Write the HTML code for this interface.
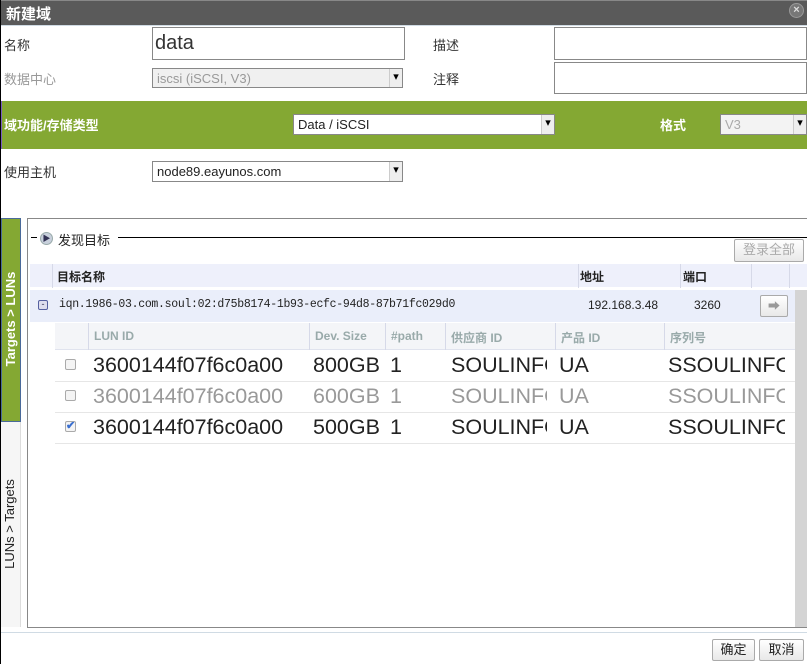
<!DOCTYPE html>
<html><head><meta charset="utf-8"><style>
*{margin:0;padding:0;box-sizing:border-box}
body{width:807px;height:664px;position:relative;overflow:hidden;background:#fff;font-family:"Liberation Sans","Noto Sans CJK SC",sans-serif;font-size:13px;color:#222}
.a{position:absolute}
.inp{position:absolute;border:1px solid #888;background:#fff}
.sel{position:absolute;border:1px solid #888;background:#fff;font-size:13px;padding:2px 4px;line-height:15px}
.sel:after{content:"▾";position:absolute;right:0;top:0;width:12px;height:100%;background:#eee;border-left:1px solid #ccc;font-size:11px;line-height:17px;text-align:center;color:#000}
.lbl{position:absolute;font-size:13px;color:#333}
.hd{position:absolute;font-weight:bold;font-size:12px}
.vl{position:absolute;width:1px;background:#d6d9e8}
.big{position:absolute;font-size:21.5px;line-height:21px;white-space:nowrap;overflow:hidden}
.sub{position:absolute;font-weight:bold;font-size:12px;color:#9aa}
.btn{position:absolute;border:1px solid #aaa;background:linear-gradient(#fff,#e8e8e8);font-size:13px;text-align:center;line-height:20px;border-radius:2px}
.cb{position:absolute;width:11px;height:11px;border:1px solid #aaa;background:#f4f4f4;border-radius:2px}
</style></head><body>
<div class="a" style="left:0;top:0;width:1px;height:664px;background:#000"></div>
<div class="a" style="left:1px;top:0;width:806px;height:25px;background:#5a5a5a;border-top:1px solid #888"></div>
<div class="a" style="left:1px;top:25px;width:806px;height:1px;background:#d0dbe4"></div>
<div class="a" style="left:6px;top:3px;color:#fff;font-weight:bold;font-size:15px">新建域</div>
<div class="a" style="left:789px;top:3px;width:15px;height:15px;border-radius:50%;background:#777;border:1px solid #999;color:#ddd;font-size:11px;text-align:center;line-height:13px;font-weight:bold">×</div>

<div class="lbl" style="left:4px;top:35px">名称</div>
<div class="inp" style="left:152px;top:27px;width:253px;height:33px;font-size:20px;padding:4px 2px;color:#333">data</div>
<div class="lbl" style="left:4px;top:69px;color:#999">数据中心</div>
<div class="sel" style="left:152px;top:68px;width:251px;height:20px;background:#f0f0f0;color:#999">iscsi (iSCSI, V3)</div>
<div class="lbl" style="left:433px;top:35px">描述</div>
<div class="inp" style="left:554px;top:27px;width:253px;height:33px"></div>
<div class="lbl" style="left:433px;top:69px">注释</div>
<div class="inp" style="left:554px;top:62px;width:253px;height:32px"></div>

<div class="a" style="left:1px;top:101px;width:806px;height:48px;background:#84a833;border-left:1px solid #7a5fc0"></div>
<div class="a" style="left:4px;top:115px;color:#fff;font-weight:bold;font-size:13px">域功能/存储类型</div>
<div class="sel" style="left:293px;top:114px;width:262px;height:21px;color:#222">Data / iSCSI</div>
<div class="a" style="left:660px;top:115px;color:#fff;font-weight:bold;font-size:13px">格式</div>
<div class="sel" style="left:720px;top:114px;width:87px;height:21px;background:#f3f3f3;color:#aaa">V3</div>

<div class="lbl" style="left:4px;top:162px">使用主机</div>
<div class="sel" style="left:152px;top:161px;width:251px;height:21px">node89.eayunos.com</div>

<div class="a" style="left:1px;top:218px;width:20px;height:204px;background:#84a833;border:1px solid #4a6a9a"></div>
<div class="a" style="left:-42px;top:309px;width:106px;height:20px;transform:rotate(-90deg);color:#fff;font-weight:bold;font-size:13px;text-align:center;line-height:20px">Targets &gt; LUNs</div>
<div class="a" style="left:1px;top:422px;width:20px;height:205px;background:#f6f6f6;border-right:1px solid #ddd"></div>
<div class="a" style="left:-43px;top:514px;width:106px;height:20px;transform:rotate(-90deg);color:#222;font-size:13px;text-align:center;line-height:20px">LUNs &gt; Targets</div>

<div class="a" style="left:27px;top:218px;width:781px;height:410px;border:1px solid #888;border-right:none"></div>
<div class="a" style="left:31px;top:237px;width:6px;height:1px;background:#000"></div>
<div class="a" style="left:118px;top:237px;width:689px;height:1px;background:#000"></div>
<div class="a" style="left:40px;top:232px;width:13px;height:13px;border-radius:50%;background:#c8d0dc;border:1px solid #9aa;font-size:8px;color:#335;text-align:center;line-height:11px">▶</div>
<div class="a" style="left:58px;top:230px;font-size:13px">发现目标</div>
<div class="btn" style="left:734px;top:239px;width:70px;height:23px;color:#aaa">登录全部</div>

<div class="a" style="left:30px;top:264px;width:777px;height:24px;background:#eef0fb;border-bottom:1px solid #fff"></div>
<div class="vl" style="left:52px;top:264px;height:24px"></div>
<div class="vl" style="left:578px;top:264px;height:24px"></div>
<div class="vl" style="left:680px;top:264px;height:24px"></div>
<div class="vl" style="left:751px;top:264px;height:24px"></div>
<div class="vl" style="left:789px;top:264px;height:24px"></div>
<div class="hd" style="left:57px;top:268px">目标名称</div>
<div class="hd" style="left:580px;top:268px">地址</div>
<div class="hd" style="left:683px;top:268px">端口</div>

<div class="a" style="left:30px;top:290px;width:765px;height:32px;background:#eaeefa"></div>
<div class="a" style="left:38px;top:300px;width:10px;height:10px;border:1px solid #5560a0;border-radius:2px;background:#dde;font-size:9px;line-height:7px;text-align:center;color:#335">-</div>
<div class="a" style="left:59px;top:298px;font-family:'Liberation Mono',monospace;font-size:11.5px;letter-spacing:-0.3px">iqn.1986-03.com.soul:02:d75b8174-1b93-ecfc-94d8-87b71fc029d0</div>
<div class="a" style="left:588px;top:298px;font-size:12px">192.168.3.48</div>
<div class="a" style="left:694px;top:298px;font-size:12px">3260</div>
<div class="btn" style="left:760px;top:295px;width:28px;height:22px;color:#999;font-size:12px">➡</div>
<div class="a" style="left:795px;top:290px;width:12px;height:337px;background:#d4d4d4"></div>

<div class="a" style="left:55px;top:323px;width:740px;height:27px;background:#f4f5f8;border-bottom:1px solid #e0e3ee"></div>
<div class="vl" style="left:88px;top:323px;height:27px"></div>
<div class="vl" style="left:309px;top:323px;height:27px"></div>
<div class="vl" style="left:385px;top:323px;height:27px"></div>
<div class="vl" style="left:445px;top:323px;height:27px"></div>
<div class="vl" style="left:555px;top:323px;height:27px"></div>
<div class="vl" style="left:664px;top:323px;height:27px"></div>
<div class="sub" style="left:94px;top:329px">LUN ID</div>
<div class="sub" style="left:315px;top:329px">Dev. Size</div>
<div class="sub" style="left:391px;top:329px">#path</div>
<div class="sub" style="left:451px;top:329px">供应商 ID</div>
<div class="sub" style="left:561px;top:329px">产品 ID</div>
<div class="sub" style="left:670px;top:329px">序列号</div>

<div class="a" style="left:55px;top:381px;width:740px;height:1px;background:#e6e6e6"></div>
<div class="a" style="left:55px;top:412px;width:740px;height:1px;background:#e6e6e6"></div>
<div class="a" style="left:55px;top:443px;width:740px;height:1px;background:#e6e6e6"></div>

<div class="cb" style="left:65px;top:359px"></div>
<div class="big" style="left:93px;top:355px;width:202px">3600144f07f6c0a00</div>
<div class="big" style="left:313px;top:355px">800GB</div><div class="big" style="left:390px;top:355px">1</div>
<div class="big" style="left:451px;top:355px;width:96px">SOULINFO</div><div class="big" style="left:559px;top:355px">UA</div>
<div class="big" style="left:668px;top:355px;width:117px">SSOULINFOU</div>

<div style="color:#999">
<div class="cb" style="left:65px;top:390px"></div>
<div class="big" style="left:93px;top:386px;width:202px">3600144f07f6c0a00</div>
<div class="big" style="left:313px;top:386px">600GB</div><div class="big" style="left:390px;top:386px">1</div>
<div class="big" style="left:451px;top:386px;width:96px">SOULINFO</div><div class="big" style="left:559px;top:386px">UA</div>
<div class="big" style="left:668px;top:386px;width:117px">SSOULINFOU</div>
</div>

<div class="cb" style="left:65px;top:421px;color:#3a6fd0;font-size:11px;line-height:9px;text-align:center;font-weight:bold">✔</div>
<div class="big" style="left:93px;top:417px;width:202px">3600144f07f6c0a00</div>
<div class="big" style="left:313px;top:417px">500GB</div><div class="big" style="left:390px;top:417px">1</div>
<div class="big" style="left:451px;top:417px;width:96px">SOULINFO</div><div class="big" style="left:559px;top:417px">UA</div>
<div class="big" style="left:668px;top:417px;width:117px">SSOULINFOU</div>

<div class="a" style="left:1px;top:632px;width:806px;height:1px;background:#d0dbe4"></div>
<div class="btn" style="left:712px;top:639px;width:43px;height:22px">确定</div>
<div class="btn" style="left:759px;top:639px;width:45px;height:22px">取消</div>
</body></html>
